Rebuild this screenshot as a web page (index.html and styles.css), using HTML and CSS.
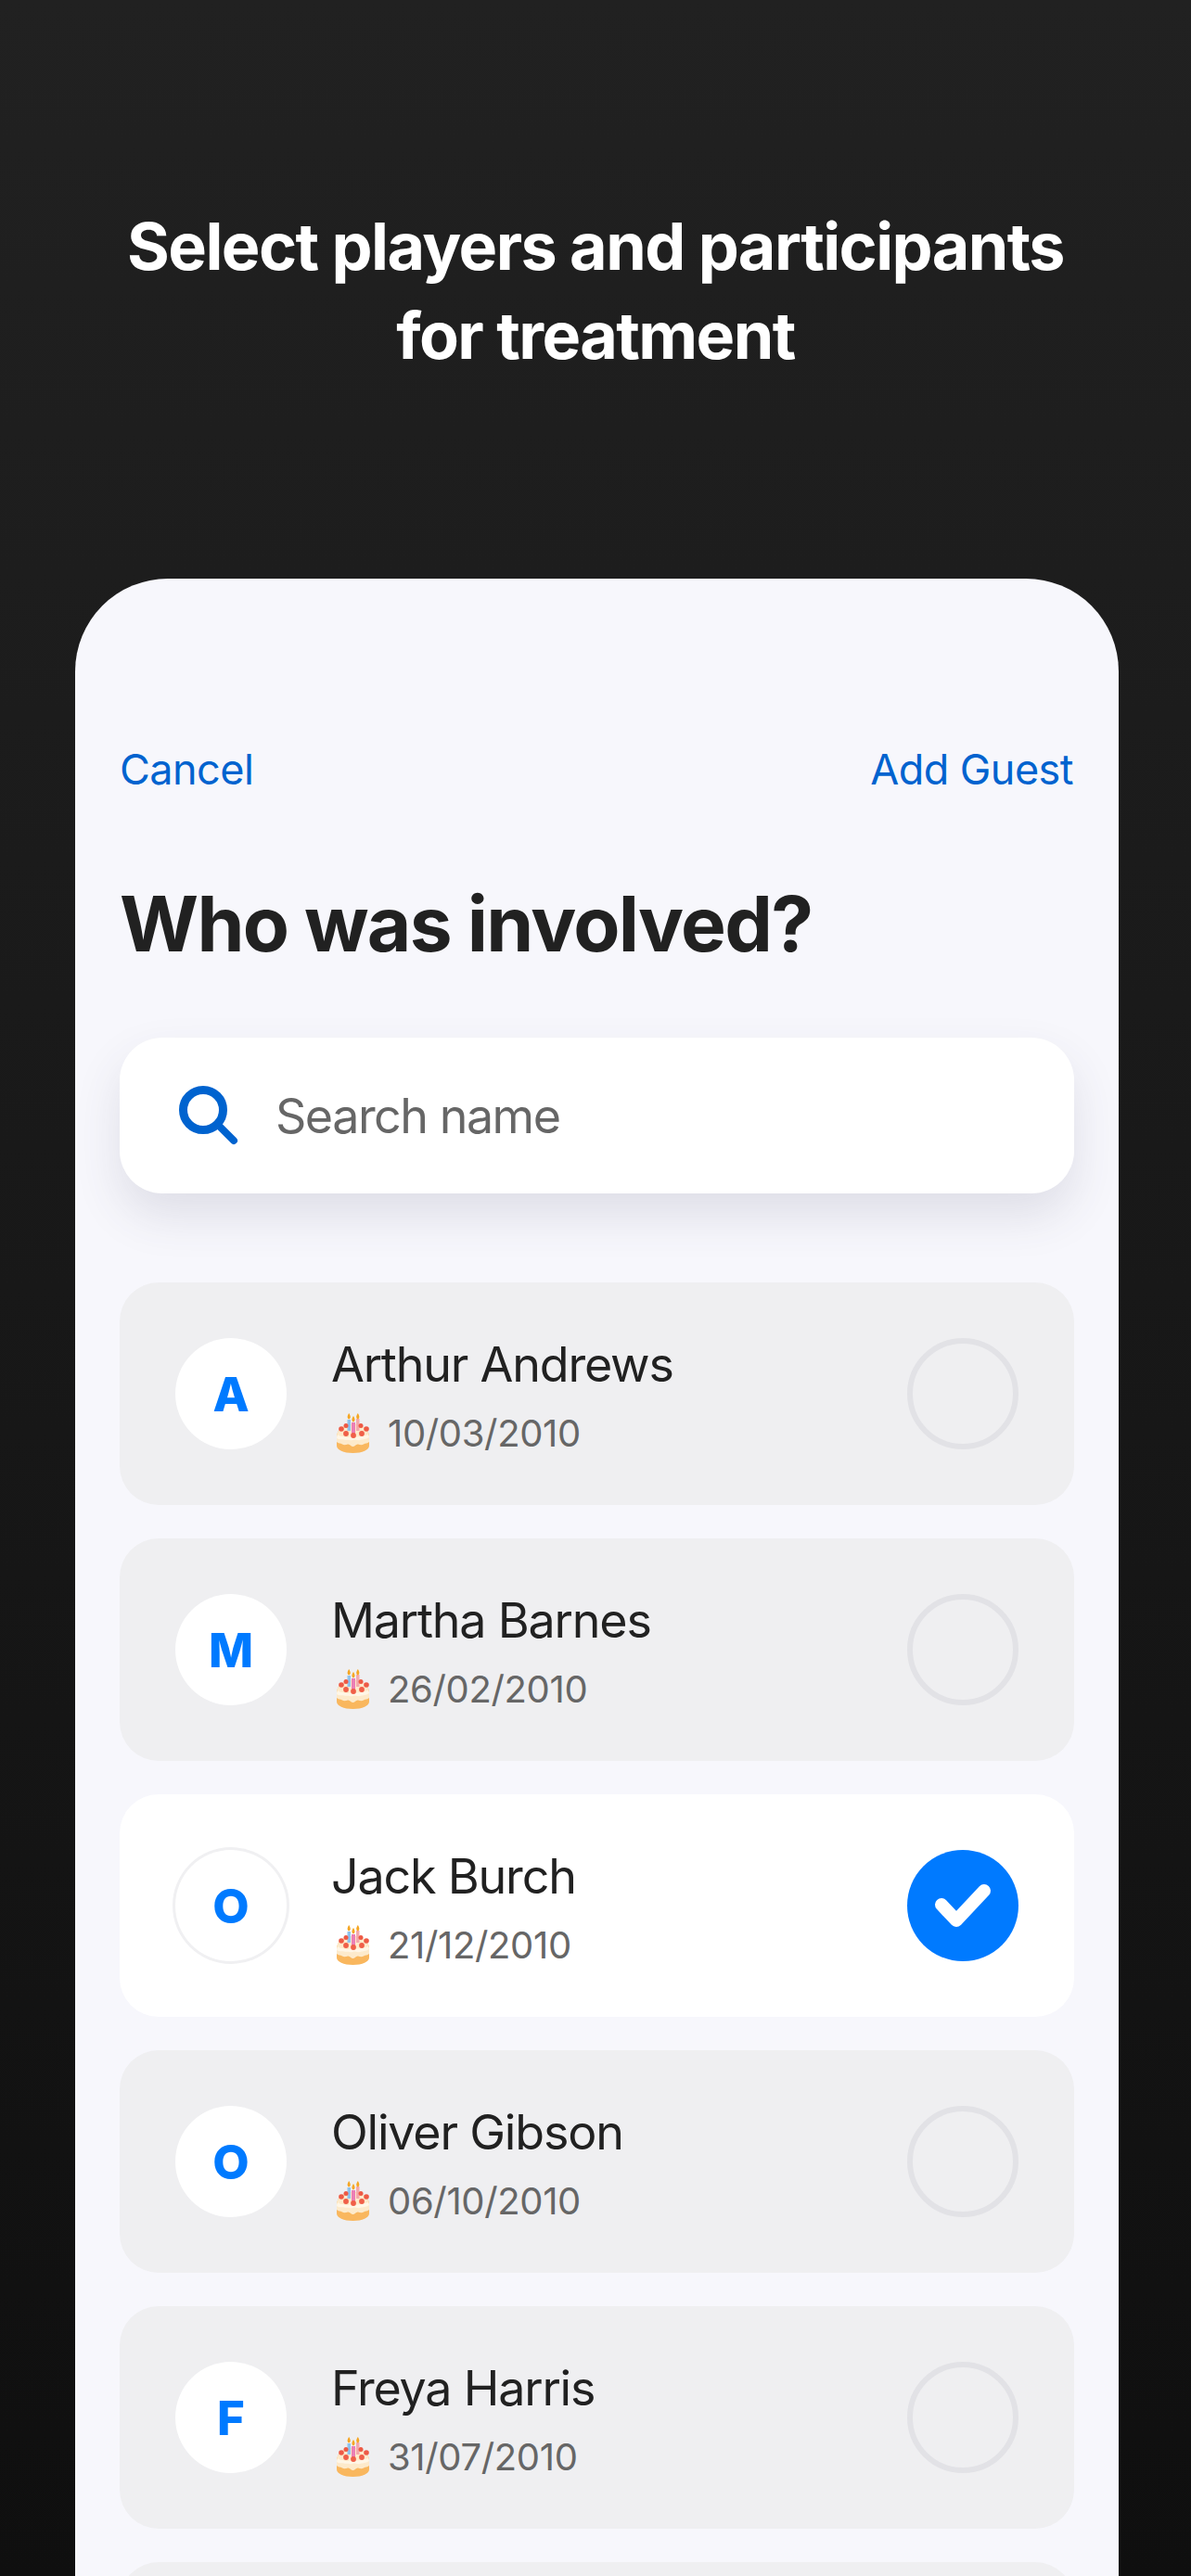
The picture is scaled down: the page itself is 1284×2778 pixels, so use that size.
FILE: index.html
```html
<!DOCTYPE html>
<html lang="en">
<head>
    <meta charset="UTF-8">
    <meta name="viewport" content="width=device-width, initial-scale=1.0">
    <title>Who was involved?</title>
    <link rel="stylesheet" href="styles.css">
</head>
<body>
    <svg class="defs" width="0" height="0" aria-hidden="true">
        <symbol id="cake" viewBox="0 0 35 43">
            <!-- cake body -->
            <path d="M0 26C0 17 8 12 17.500 12S35 17 35 26v9c0 4.500-7.500 8-17.500 8S0 39.500 0 35z" fill="#f9b75e"/>
            <path d="M0 26C0 17 8 12 17.500 12S35 17 35 26v5c-2 2-4 1-6 2.500s-4 .5-6 0-3.500 2.500-5.500 2.500-3.500-3-5.500-2.500-4 1.500-6 0-4-.5-6-2.500z" fill="#fdeacb"/>
            <path d="M1 23c3 3 5 1.500 7 2.500s4 1 6 0 4 1.500 6 .5 5 0 14-3c.5 1 .9 2 1 3-4 2.500-7 2-9 2.800s-4 .2-6-.3-4 1.200-6 .5-4 0-6-.5-5 .5-8-1.500c.1-1.500.5-2.500 1-3.500z" fill="#fff6e6"/>
            <!-- candles -->
            <rect x="11.500" y="7" width="3.500" height="12" fill="#8fc3ee"/>
            <rect x="21" y="6" width="3.500" height="13" fill="#f4a9ad"/>
            <rect x="16" y="10" width="4" height="14" fill="#ec7fb5"/>
            <path d="M13.200 0c-1.800 2.800-2.400 5-.1 6.500 2.300-1 2-3.500.1-6.500z" fill="#f5a623"/>
            <path d="M18 3c-1.800 2.800-2.400 5-.1 6.500 2.300-1 2-3.500.1-6.500z" fill="#f5a623"/>
            <path d="M22.800 0c-1.800 2.800-2.400 5-.1 6.500 2.300-1 2-3.500.1-6.500z" fill="#f5a623"/>
            <!-- strawberries -->
            <circle cx="5" cy="17" r="2.800" fill="#ee5a45"/>
            <circle cx="10" cy="13.500" r="2.500" fill="#ee5a45"/>
            <circle cx="26" cy="13.500" r="2.500" fill="#ee5a45"/>
            <circle cx="32" cy="17" r="2.800" fill="#ee5a45"/>
            <circle cx="10" cy="22" r="2.900" fill="#f05f48"/>
            <circle cx="18" cy="24" r="2.900" fill="#f05f48"/>
            <circle cx="27" cy="22" r="2.900" fill="#f05f48"/>
        </symbol>
    </svg>

    <header class="intro">
        <h1>Select players and participants<br>for treatment</h1>
    </header>

    <main class="sheet">
        <nav class="sheet-nav">
            <a>Cancel</a>
            <a>Add Guest</a>
        </nav>

        <h2>Who was involved?</h2>

        <div class="search">
            <svg class="search-icon" width="64" height="64" viewBox="0 0 64 64" fill="none" stroke="#0063cf">
                <circle cx="26" cy="26" r="21.500" stroke-width="9"/>
                <line x1="43" y1="43" x2="59" y2="59" stroke-width="8" stroke-linecap="round"/>
            </svg>
            <span>Search name</span>
        </div>

        <section class="players">
            <div class="player">
                <div class="avatar">A</div>
                <div class="info">
                    <div class="name">Arthur Andrews</div>
                    <div class="dob"><svg class="cake" width="35" height="43"><use href="#cake"/></svg>10/03/2010</div>
                </div>
                <div class="radio"></div>
            </div>
            <div class="player">
                <div class="avatar">M</div>
                <div class="info">
                    <div class="name">Martha Barnes</div>
                    <div class="dob"><svg class="cake" width="35" height="43"><use href="#cake"/></svg>26/02/2010</div>
                </div>
                <div class="radio"></div>
            </div>
            <div class="player selected">
                <div class="avatar">O</div>
                <div class="info">
                    <div class="name">Jack Burch</div>
                    <div class="dob"><svg class="cake" width="35" height="43"><use href="#cake"/></svg>21/12/2010</div>
                </div>
                <div class="radio">
                    <svg width="120" height="120" viewBox="0 0 120 120" fill="none">
                        <path d="M37 59l16 17 30-32" stroke="#fff" stroke-width="14" stroke-linecap="round" stroke-linejoin="round"/>
                    </svg>
                </div>
            </div>
            <div class="player">
                <div class="avatar">O</div>
                <div class="info">
                    <div class="name">Oliver Gibson</div>
                    <div class="dob"><svg class="cake" width="35" height="43"><use href="#cake"/></svg>06/10/2010</div>
                </div>
                <div class="radio"></div>
            </div>
            <div class="player">
                <div class="avatar">F</div>
                <div class="info">
                    <div class="name">Freya Harris</div>
                    <div class="dob"><svg class="cake" width="35" height="43"><use href="#cake"/></svg>31/07/2010</div>
                </div>
                <div class="radio"></div>
            </div>
            <div class="player player-cut"></div>
        </section>
    </main>
</body>
</html>
```

FILE: styles.css
```css
html, body {
    height: 2778px;
    overflow: hidden;
}

body {
    margin: 0;
    font-family: Inter, "Liberation Sans", sans-serif;
    color: #212121;
    background: linear-gradient(#212121, #0f0f0f);
}

.defs {
    position: absolute;
}

.intro {
    height: 624px;
    box-sizing: border-box;
    padding-top: 218px;
}

h1 {
    margin: 0;
    font-size: 70px;
    line-height: 96px;
    font-weight: 700;
    letter-spacing: -1.6px;
    text-align: center;
    color: #fff;
}

.sheet {
    margin: 0 78px 0 81px;
    height: 2154px;
    box-sizing: border-box;
    padding: 179px 48px 0;
    background-color: #f7f7fc;
    border-radius: 100px 100px 0 0;
}

.sheet-nav {
    display: flex;
    justify-content: space-between;
    padding-right: 1px;
    font-size: 45px;
    line-height: 54px;
    letter-spacing: -0.55px;
    color: #0063cf;
}

h2 {
    margin: 92px 0 0;
    font-size: 82px;
    line-height: 96px;
    font-weight: 700;
    letter-spacing: -1.7px;
}

.search {
    display: flex;
    align-items: center;
    gap: 40px;
    height: 168px;
    margin-top: 74px;
    padding-left: 64px;
    background-color: #fff;
    border-radius: 46px;
    box-shadow: 0 24px 50px rgba(60, 60, 90, 0.13);
    font-size: 52px;
    letter-spacing: -1.5px;
    color: #666;
}

.players {
    display: flex;
    flex-direction: column;
    gap: 36px;
    margin-top: 96px;
}

.player {
    display: flex;
    align-items: center;
    gap: 48px;
    height: 240px;
    flex-shrink: 0;
    padding: 0 60px;
    background-color: #efeff1;
    border-radius: 42px;
}

.player.selected {
    background-color: #fff;
}

.avatar {
    display: flex;
    align-items: center;
    justify-content: center;
    width: 120px;
    height: 120px;
    flex-shrink: 0;
    border-radius: 50%;
    background-color: #fff;
    color: #007aff;
    font-size: 51px;
    font-weight: 800;
}

.selected .avatar {
    box-shadow: 0 0 0 3px #f0f0f2;
}

.info {
    flex: 1;
    padding-top: 5px;
}

.name {
    font-size: 52px;
    line-height: 60px;
    letter-spacing: -1.2px;
}

.dob {
    display: flex;
    align-items: center;
    gap: 20px;
    margin-top: 20px;
    font-size: 40px;
    line-height: 48px;
    letter-spacing: -0.35px;
    color: #666;
}

.cake {
    margin-left: 6px;
}

.radio {
    width: 120px;
    height: 120px;
    flex-shrink: 0;
    box-sizing: border-box;
    border: 6px solid #e2e2e6;
    border-radius: 50%;
}

.selected .radio {
    border: none;
    background-color: #007aff;
}

.selected .radio svg {
    display: block;
}
```
